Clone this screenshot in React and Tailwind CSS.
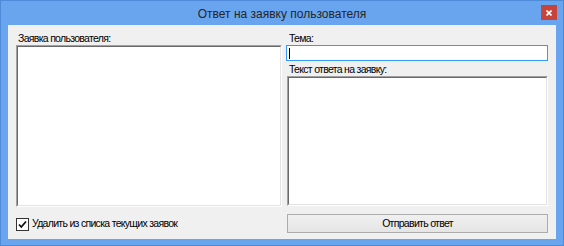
export default function App() {
  const ui = { fontFamily: '"Liberation Sans", Arial, sans-serif' };
  return (
    <div className="w-[564px] h-[246px] bg-[#69a4ee] border border-[#4f8ad8] flex flex-col overflow-hidden" style={ui}>
      <div className="relative h-[24px] shrink-0 flex items-center justify-center">
        <span className="text-[12px] leading-none text-[#262626] mt-[2px]">
          Ответ на заявку пользователя
        </span>
        <div className="absolute right-[6px] top-[4px] w-[16px] h-[15px] bg-[#c8443b] flex items-center justify-center">
          <svg width="6" height="6" viewBox="0 0 6 6">
            <path d="M0.5 0.5 L5.5 5.5 M5.5 0.5 L0.5 5.5" stroke="#ffffff" strokeWidth="1.6" />
          </svg>
        </div>
      </div>
      <div className="ml-[7px] w-[548px] h-[214px] bg-[#f0f0f0] flex flex-col pl-[8px] pr-[8px] pt-[7px] text-[10.5px] text-[#000] tracking-[-0.7px]">
        <div className="flex gap-[4px]">
          <div className="w-[266px] flex flex-col">
            <div className="h-[13px] leading-[13px] pl-[2px]">Заявка пользователя:</div>
            <div className="h-[162px] border border-t-[#a0a0a0] border-l-[#a0a0a0] border-r-white border-b-white">
              <div className="h-full border border-t-[#696969] border-l-[#696969] border-r-[#e3e3e3] border-b-[#e3e3e3] bg-white"></div>
            </div>
          </div>
          <div className="w-[262px] flex flex-col">
            <div className="h-[13px] leading-[13px] pl-[3px]">Тема:</div>
            <div className="h-[16px] border border-[#3399ff] bg-white flex items-center pl-[2px]">
              <div className="w-[1px] h-[11px] bg-black"></div>
            </div>
            <div className="h-[13px] leading-[13px] pl-[3px] mt-[2px]">Текст ответа на заявку:</div>
            <div className="ml-[1px] h-[130px] border border-t-[#a0a0a0] border-l-[#a0a0a0] border-r-white border-b-white">
              <div className="h-full border border-t-[#696969] border-l-[#696969] border-r-[#e3e3e3] border-b-[#e3e3e3] bg-white"></div>
            </div>
          </div>
        </div>
        <div className="flex gap-[4px] mt-[7px]">
          <div className="w-[266px] flex items-center h-[19px]">
            <div className="w-[13px] h-[13px] border border-[#333333] bg-white flex items-center justify-center mt-[1px]">
              <svg width="9" height="9" viewBox="0 0 9 9">
                <path d="M1 4.5 L3.3 7 L8 1.5" stroke="#111" strokeWidth="1.8" fill="none" />
              </svg>
            </div>
            <span className="ml-[3px] leading-[13px]">Удалить из списка текущих заявок</span>
          </div>
          <div className="ml-[1px] w-[261px] h-[19px] border border-[#acacac] bg-gradient-to-b from-[#f0f0f0] to-[#e5e5e5] flex items-center justify-center leading-[13px]">
            Отправить ответ
          </div>
        </div>
      </div>
    </div>
  );
}
